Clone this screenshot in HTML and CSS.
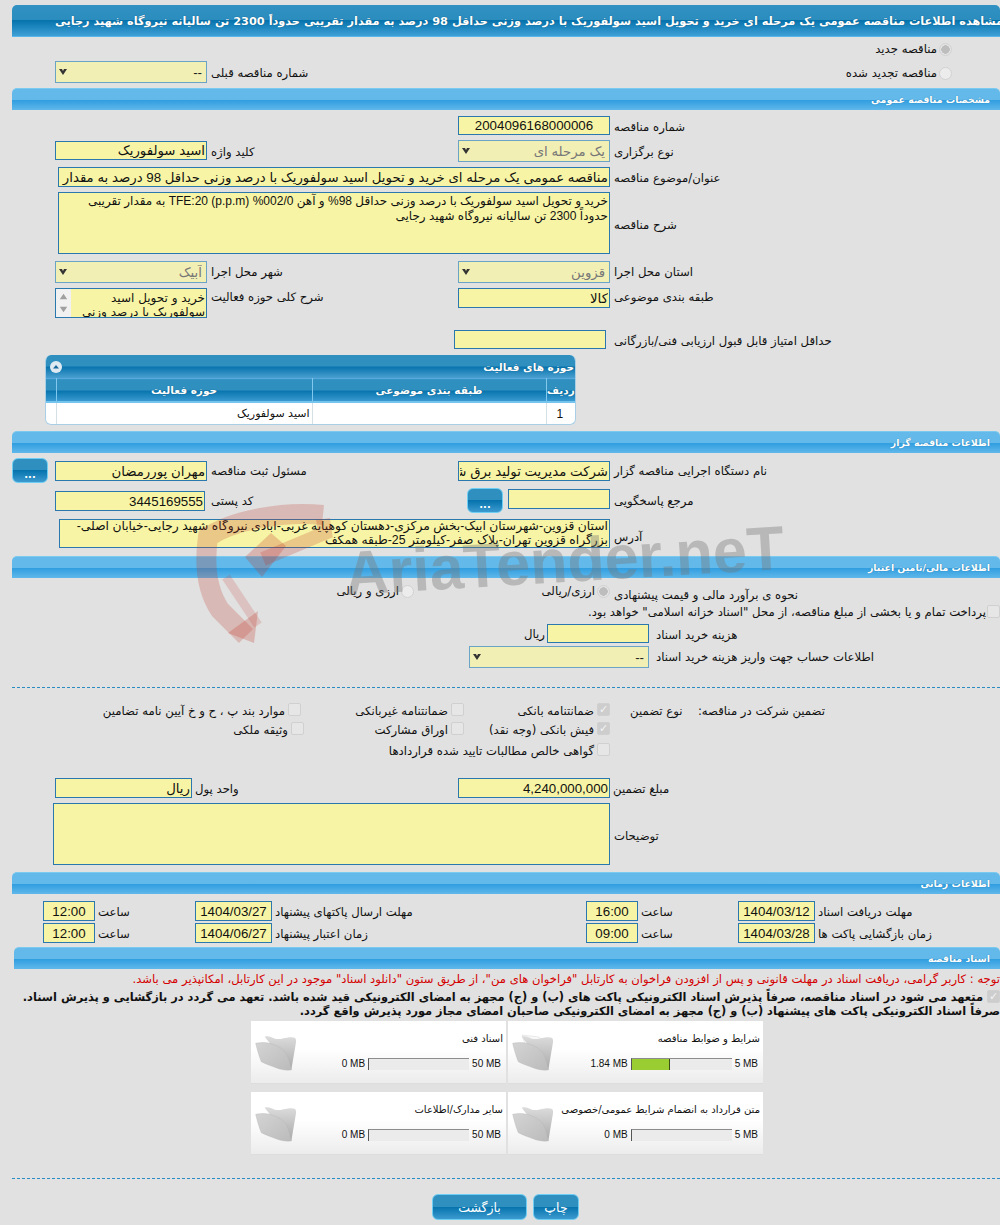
FILE: index.html
```html
<!DOCTYPE html>
<html lang="fa" dir="rtl">
<head>
<meta charset="utf-8">
<title>مشاهده اطلاعات مناقصه</title>
<link rel="stylesheet" href="styles.css">
</head>
<body>
<main class="page">
  <h1 class="title"><span>مشاهده اطلاعات مناقصه عمومی یک مرحله ای خرید و تحویل اسید سولفوریک با درصد وزنی حداقل 98 درصد به مقدار تقریبی حدوداً 2300 تن سالیانه نیروگاه شهید رجایی</span></h1>

  <div class="row r-new"><label class="radio-label"><input class="radio" type="radio" checked disabled>مناقصه جدید</label></div>
  <div class="row r-prev">
    <label class="radio-label span2 renewed"><input class="radio" type="radio" disabled>مناقصه تجدید شده</label>
    <div class="lbl">شماره مناقصه قبلی</div>
    <div class="sel"><select disabled class="dark"><option>--</option></select><svg class="arrow" viewBox="0 0 8 6"><path d="M0 0h3l1 2 1-2h3L4 6z"/></svg></div>
  </div>

  <h2 class="sec s1">مشخصات مناقصه عمومی</h2>
  <div class="row r-num"><div class="lbl">شماره مناقصه</div><input class="inp center" value="2004096168000006" readonly></div>
  <div class="row r-type">
    <div class="lbl">نوع برگزاری</div>
    <div class="sel"><select disabled><option>یک مرحله ای</option></select><svg class="arrow" viewBox="0 0 8 6"><path d="M0 0h3l1 2 1-2h3L4 6z"/></svg></div>
    <div class="lbl">کلید واژه</div>
    <input class="inp kw" value="اسید سولفوریک" readonly>
  </div>
  <div class="row r-subj">
    <div class="lbl">عنوان/موضوع مناقصه</div>
    <input class="inp span3 wide" value="مناقصه عمومی یک مرحله ای خرید و تحویل اسید سولفوریک با درصد وزنی حداقل 98 درصد به مقدار تقریبی حدوداً 2300 تن سالیانه نیروگاه شهید رجایی" readonly>
  </div>
  <div class="row r-desc">
    <div class="lbl mid">شرح مناقصه</div>
    <textarea class="inp span3 wide" readonly>خرید و تحویل اسید سولفوریک با درصد وزنی حداقل 98% و آهن 002/0% TFE:20 (p.p.m) به مقدار تقریبی حدوداً 2300 تن سالیانه نیروگاه شهید رجایی</textarea>
  </div>
  <div class="row r-prov">
    <div class="lbl">استان محل اجرا</div>
    <div class="sel"><select disabled><option>قزوین</option></select><svg class="arrow" viewBox="0 0 8 6"><path d="M0 0h3l1 2 1-2h3L4 6z"/></svg></div>
    <div class="lbl">شهر محل اجرا</div>
    <div class="sel"><select disabled><option>آبیک</option></select><svg class="arrow" viewBox="0 0 8 6"><path d="M0 0h3l1 2 1-2h3L4 6z"/></svg></div>
  </div>
  <div class="row r-cat">
    <div class="lbl top">طبقه بندی موضوعی</div>
    <input class="inp h20" value="کالا" readonly>
    <div class="lbl top">شرح کلی حوزه فعالیت</div>
    <div class="listbox">
      <div class="lb-text">خرید و تحویل اسید سولفوریک با درصد وزنی</div>
      <div class="lb-scroll"><svg viewBox="0 0 15 30"><path d="M7.5 5l4 6h-8zM7.5 25l4-6h-8z"/></svg></div>
    </div>
  </div>
  <div class="row r-min">
    <div class="lbl">حداقل امتیاز قابل قبول ارزیابی فنی/بازرگانی</div>
    <input class="inp shift4" readonly>
  </div>

  <section class="panel">
    <header class="panel-head"><span>حوزه های فعالیت</span><svg class="toggle" viewBox="0 0 12 12"><circle cx="6" cy="6" r="6"/><path d="M3 7.5L6 4l3 3.500z"/></svg></header>
    <table class="grid">
      <thead><tr><th class="c1">ردیف</th><th class="c2">طبقه بندی موضوعی</th><th class="c3">حوزه فعالیت</th><th class="c4"></th></tr></thead>
      <tbody><tr><td class="c1 num">1</td><td class="c2"></td><td class="c3">اسید سولفوریک</td><td class="c4"></td></tr></tbody>
    </table>
  </section>

  <h2 class="sec s2">اطلاعات مناقصه گزار</h2>
  <div class="row r-org">
    <div class="lbl">نام دستگاه اجرایی مناقصه گزار</div>
    <input class="inp h20 mt3" value="شرکت مدیریت تولید برق شهید رجایی" readonly>
    <div class="lbl">مسئول ثبت مناقصه</div>
    <input class="inp h20 mt3" value="مهران پوررمضان" readonly>
    <button class="btn dots" type="button">...</button>
  </div>
  <div class="row r-resp">
    <div class="lbl">مرجع پاسخگویی</div>
    <div class="resp"><input class="inp h20 short" readonly><button class="btn dots" type="button">...</button></div>
    <div class="lbl postal-l">کد پستی</div>
    <input class="inp h20 mt3 postal" value="3445169555" readonly>
  </div>
  <div class="row r-addr">
    <div class="lbl">آدرس</div>
    <textarea class="inp span3 addr" readonly>استان قزوین-شهرستان آبیک-بخش مرکزی-دهستان کوهپایه غربی-آبادی نیروگاه شهید رجایی-خیابان اصلی-بزرگراه قزوین تهران-پلاک صفر-کیلومتر 25-طبقه همکف</textarea>
  </div>

  <h2 class="sec s3">اطلاعات مالی/تامین اعتبار</h2>
  <div class="row r-est">
    <div class="lbl">نحوه ی برآورد مالی و قیمت پیشنهادی</div>
    <div class="est span3">
      <label class="radio-label"><input class="radio" type="radio" checked disabled>ارزی/ریالی</label>
      <label class="radio-label"><input class="radio" type="radio" disabled>ارزی و ریالی</label>
    </div>
  </div>
  <label class="pay"><input class="check" type="checkbox" disabled>پرداخت تمام و یا بخشی از مبلغ مناقصه، از محل "اسناد خزانه اسلامی" خواهد بود.</label>
  <div class="fin r-cost">
    <div class="lbl">هزینه خرید اسناد</div>
    <input class="inp cost" readonly>
    <div class="unit">ریال</div>
  </div>
  <div class="fin r-acc">
    <div class="lbl">اطلاعات حساب جهت واریز هزینه خرید اسناد</div>
    <div class="sel acc"><select disabled class="dark"><option>--</option></select><svg class="arrow" viewBox="0 0 8 6"><path d="M0 0h3l1 2 1-2h3L4 6z"/></svg></div>
  </div>

  <hr class="dash d1">

  <div class="guar">
    <div class="g-head"><span>تضمین شرکت در مناقصه:</span><span>نوع تضمین</span></div>
    <div class="g-list">
      <label class="gc"><input class="check" type="checkbox" checked disabled>ضمانتنامه بانکی</label>
      <label class="gc"><input class="check" type="checkbox" disabled>ضمانتنامه غیربانکی</label>
      <label class="gc"><input class="check" type="checkbox" disabled>موارد بند پ ، ح و خ آیین نامه تضامین</label>
      <label class="gc tall"><input class="check" type="checkbox" checked disabled>فیش بانکی (وجه نقد)</label>
      <label class="gc tall"><input class="check" type="checkbox" disabled>اوراق مشارکت</label>
      <label class="gc tall nudge"><input class="check" type="checkbox" disabled>وثیقه ملکی</label>
      <label class="gc all"><input class="check" type="checkbox" disabled>گواهی خالص مطالبات تایید شده قراردادها</label>
    </div>
  </div>

  <div class="row r-amt">
    <div class="lbl">مبلغ تضمین</div>
    <input class="inp h20" value="4,240,000,000" readonly>
    <div class="lbl">واحد پول</div>
    <input class="inp h20" value="ریال" readonly>
  </div>
  <div class="row r-notes">
    <div class="lbl">توضیحات</div>
    <textarea class="inp span3 notes" readonly></textarea>
  </div>

  <h2 class="sec s4">اطلاعات زمانی</h2>
  <div class="times t1">
    <div class="lbl">مهلت دریافت اسناد</div><input class="inp h20 tv" value="1404/03/12" readonly>
    <div class="lbl">ساعت</div><input class="inp h20 tv" value="16:00" readonly>
    <div class="lbl">مهلت ارسال پاکتهای پیشنهاد</div><input class="inp h20 tv" value="1404/03/27" readonly>
    <div class="lbl">ساعت</div><input class="inp h20 tv" value="12:00" readonly>
  </div>
  <div class="times t2">
    <div class="lbl">زمان بازگشایی پاکت ها</div><input class="inp h20 tv" value="1404/03/28" readonly>
    <div class="lbl">ساعت</div><input class="inp h20 tv" value="09:00" readonly>
    <div class="lbl">زمان اعتبار پیشنهاد</div><input class="inp h20 tv" value="1404/06/27" readonly>
    <div class="lbl">ساعت</div><input class="inp h20 tv" value="12:00" readonly>
  </div>

  <h2 class="sec s5">اسناد مناقصه</h2>
  <p class="warn">توجه : کاربر گرامی، دریافت اسناد در مهلت قانونی و پس از افزودن فراخوان به کارتابل "فراخوان های من"، از طریق ستون "دانلود اسناد" موجود در این کارتابل، امکانپذیر می باشد.</p>
  <p class="oath"><input class="check" type="checkbox" checked disabled>متعهد می شود در اسناد مناقصه، صرفاً پذیرش اسناد الکترونیکی پاکت های (ب) و (ج) مجهز به امضای الکترونیکی قید شده باشد. تعهد می گردد در بازگشایی و پذیرش اسناد.<br>صرفاً اسناد الکترونیکی پاکت های پیشنهاد (ب) و (ج) مجهز به امضای الکترونیکی صاحبان امضای مجاز مورد پذیرش واقع گردد.</p>

  <div class="cards">
    <article class="card">
      <div class="card-main"><h3>شرایط و ضوابط مناقصه</h3>
        <div class="meter"><span>5 MB</span><div class="bar"><div class="fill" style="width:38px"></div></div><span>1.84 MB</span></div></div>
      <svg class="folder" viewBox="0 0 42 42"><use href="#paper"/><use href="#fold"/></svg>
    </article>
    <article class="card">
      <div class="card-main"><h3>اسناد فنی</h3>
        <div class="meter"><span>50 MB</span><div class="bar"><div class="fill" style="width:0"></div></div><span>0 MB</span></div></div>
      <svg class="folder" viewBox="0 0 42 42"><use href="#fold"/></svg>
    </article>
    <article class="card">
      <div class="card-main"><h3>متن قرارداد به انضمام شرایط عمومی/خصوصی</h3>
        <div class="meter"><span>5 MB</span><div class="bar"><div class="fill" style="width:0"></div></div><span>0 MB</span></div></div>
      <svg class="folder" viewBox="0 0 42 42"><use href="#fold"/></svg>
    </article>
    <article class="card">
      <div class="card-main"><h3>سایر مدارک/اطلاعات</h3>
        <div class="meter"><span>50 MB</span><div class="bar"><div class="fill" style="width:0"></div></div><span>0 MB</span></div></div>
      <svg class="folder" viewBox="0 0 42 42"><use href="#fold"/></svg>
    </article>
  </div>

  <hr class="dash d2">

  <div class="actions">
    <button class="btn print" type="button">چاپ</button>
    <button class="btn back" type="button">بازگشت</button>
  </div>

  <svg class="defs" width="0" height="0" aria-hidden="true">
    <defs>
      <linearGradient id="fb" x1="0" y1="0" x2="0" y2="1"><stop offset="0" stop-color="#dcdcdc"/><stop offset="1" stop-color="#a9a9a9"/></linearGradient>
      <linearGradient id="ff" x1="0" y1="0" x2="1" y2="1"><stop offset="0" stop-color="#d4d4d4"/><stop offset="1" stop-color="#bbbbbb"/></linearGradient>
      <g id="paper"><path d="M10 5l17 2 5 6-4 8-14-4z" fill="#f8f8f8" stroke="#dddddd" stroke-width=".6"/></g>
      <g id="fold">
        <path d="M9.700 6.700c3-1 6 0 9 1.500 3 1.300 6 1 9 .3 4-1 9-2 12-.8 1.300.6 1.500 2.500 1.300 4.500L36.300 40 24 25z" fill="url(#fb)"/>
        <path d="M.7 13.300c5-1 10-1 14 0 7 2 13 5 16.500 10 2.500 5 4 11 5.100 16.700-5 .6-11-.5-15.300-2.300-5-2-10-3.500-14.700-6C4 26 2 19 .7 13.300z" fill="url(#ff)" stroke="#b5b5b5" stroke-width=".4"/>
      </g>
    </defs>
  </svg>

  <svg class="wm" viewBox="0 0 640 160" aria-hidden="true">
    <g class="wm-red">
      <path class="band" d="M125 10C85 6 35 15 10 32c-4 28-2 52 12 73l26 26"/>
      <path class="band thin" d="M125 14l2 14-62 26"/>
      <path class="solid" d="M30 128l30-22 -4 32z"/>
      <path class="solid dark" d="M47 52l26-24 15 13-24 31z"/>
      <path class="band slim" d="M28 72l32 48"/>
    </g>
    <text class="wm-text" x="148" y="90" textLength="440" lengthAdjust="spacingAndGlyphs" transform="rotate(-3.400 148 90)">AriaTender.neT</text>
  </svg>
</main>
</body>
</html>
```

FILE: styles.css
```css
* { box-sizing: border-box; }
html, body { margin: 0; padding: 0; }
body {
  background: #e1e1e1;
  color: #111;
  font: 11.700px/14px "DejaVu Sans", "Liberation Sans", sans-serif;
}
.page { position: relative; width: 1000px; height: 1225px; padding-top: 5px; overflow: hidden; }

.title {
  margin: 0 0 0 12px;
  height: 32px;
  border-radius: 5px 5px 0 0;
  background: linear-gradient(#3091c2 0, #2b8cbe 48%, #0673ad 50%, #3ea0d6 100%);
  border-bottom: 1px solid #58b7ea;
  color: #fff;
  font-size: 11.300px;
  font-weight: bold;
  line-height: 34px;
  overflow: hidden;
  white-space: nowrap;
  text-shadow: 0 0 1px #024a70;
}
.title span { display: block; margin-right: -3px; }

.sec {
  margin: 0 0 0 12px;
  height: 22px;
  padding-right: 10px;
  border-radius: 5px 5px 0 0;
  border-top: 1px solid #7cc9f0;
  background: linear-gradient(#63b9e9 0, #63b9e9 50%, #2f9de0 52%, #60b8ea 100%);
  color: #fff;
  font-size: 9.400px;
  font-weight: bold;
  line-height: 21px;
  text-shadow: 0 0 1px #1a6fa0;
}
.s1 { margin-top: 5px; }
.s2 { margin-top: 6px; }
.s3 { margin-top: 8px; }
.s4 { margin-top: 7px; }
.s5 { margin: 4px 0 0 14px; }

.row { display: grid; grid-template-columns: 390px 152px 251px 152px 55px; align-items: start; }
.lbl { text-align: left; padding-left: 4px; line-height: 22px; white-space: nowrap; }
.mid { align-self: center; padding-top: 4px; }
.top { line-height: 18px; }
.span2 { grid-column: span 2; }
.span3 { grid-column: span 3; }

.inp {
  display: block;
  width: 100%;
  height: 19px;
  margin: 0;
  padding: 0 1px;
  border: 1px solid #2a78ae;
  border-radius: 0;
  background: #f7f5a5;
  color: #111;
  font: 13.300px/16px "Liberation Sans", "DejaVu Sans", sans-serif;
  outline: none;
  resize: none;
}
textarea.inp { overflow: hidden; padding: 1px; font-size: 12px; line-height: 15px; }
.h20 { height: 20px; }
.mt3 { margin-top: 3px; }
.center { text-align: center; }

.sel { position: relative; height: 22px; }
.sel select {
  appearance: none;
  width: 100%;
  height: 100%;
  padding: 0 4px 0 0;
  border: 1px solid #6ba3c4;
  border-radius: 0;
  background: #f2efb5;
  color: #777;
  opacity: 1;
  font: 13.300px "Liberation Sans", "DejaVu Sans", sans-serif;
}
.sel select.dark { color: #222; }
.arrow { position: absolute; left: 4px; top: 8px; width: 8px; height: 6px; fill: #333; }

.radio, .check { appearance: none; flex: none; width: 13px; height: 13px; margin: 0 0 0 1px; vertical-align: middle; }
.radio { border: 1px solid #d2d2d2; border-radius: 50%; background: #ececec; }
.radio:checked { background: radial-gradient(circle, #bdbdbd 0, #bdbdbd 4px, #e4e4e4 4.500px); }
.check { position: relative; border: 1px solid #d0d0d0; border-radius: 2px; background: #e6e6e6; }
.check:checked { background: #cdcdcd; }
.check:checked::before { content: "✓"; position: absolute; inset: 0; color: #f4f4f4; font: bold 11px/11px "DejaVu Sans", sans-serif; text-align: center; }

.radio-label { display: flex; align-items: center; gap: 1px; white-space: nowrap; }
.r-new { margin-top: 5px; height: 17px; }
.r-new .radio-label { grid-column: 1; padding-right: 48px; }
.r-prev { margin-top: 2px; height: 22px; }
.r-prev .lbl { line-height: 24px; }
.renewed { padding-right: 48px; align-self: center; }
.r-num { margin-top: 6px; height: 19px; }
.r-type { margin-top: 5px; height: 22px; }
.r-type .lbl { line-height: 24px; }
.kw { margin-top: 1px; }
.r-subj { margin-top: 5px; height: 20px; }
.wide { width: 552px; }
.r-subj .wide { height: 20px; }
.r-desc { margin-top: 5px; height: 62px; }
.r-desc .wide { height: 62px; }
.r-prov { margin-top: 7px; height: 22px; }
.r-cat { margin-top: 5px; height: 30px; }
.r-min { margin-top: 12px; height: 19px; }
.shift4 { margin-right: 4px; }

.listbox { display: flex; height: 30px; border: 1px solid #2a78ae; background: #f7f5a5; overflow: hidden; }
.lb-text { flex: 1; padding: 2px 1px 0 0; font-size: 12px; line-height: 14px; }
.lb-scroll { width: 15px; flex: none; background: #f1f1f1; }
.lb-scroll svg { display: block; width: 15px; height: 28px; fill: #a0a0a0; }

.panel {
  width: 531px;
  height: 70px;
  margin: 6px 424px 0 0;
  border: 1px solid #a9cfe6;
  border-top: 0;
  border-radius: 6px;
  background: #fff;
  overflow: hidden;
}
.panel-head {
  display: flex;
  justify-content: space-between;
  align-items: center;
  height: 23px;
  padding: 0 1px 0 4px;
  background: linear-gradient(#2f90c0 0, #2f90c0 48%, #0874ad 52%, #4a9fd0 100%);
  color: #fff;
  font-size: 10.500px;
  font-weight: bold;
  text-shadow: 0 0 1px #024a70;
}
.toggle { width: 12px; height: 12px; }
.toggle circle { fill: #dfe9f2; }
.toggle path { fill: #16679a; }
.grid { width: 100%; border-collapse: collapse; table-layout: fixed; }
.grid th {
  height: 23px;
  padding: 0;
  background: linear-gradient(#2f90c0 0, #2f90c0 48%, #0874ad 52%, #3c9bd2 100%);
  border-left: 1px solid #82c8ee;
  border-bottom: 2px solid #74c4ee;
  border-top: 1px solid #58a9d9;
  color: #fff;
  font-size: 10.500px;
  font-weight: bold;
  text-shadow: 0 0 1px #024a70;
}
.grid td { height: 23px; padding: 0 2px 0 0; border-left: 1px solid #d4dfe6; font-size: 11px; }
.grid .c1 { width: 29px; }
.grid .c2 { width: 234px; }
.grid .c3 { width: 256px; }
.grid .c4 { border-left: 0; }
.grid .num { text-align: center; font-family: "Liberation Sans", sans-serif; font-size: 12px; }

.btn {
  border: 1px solid #6dcdf2;
  border-radius: 6px;
  background: linear-gradient(#2f90c0 0, #2f90c0 48%, #0673ad 50%, #3c9bcf 100%);
  color: #fff;
  font: 12.500px "DejaVu Sans", sans-serif;
  padding: 0;
}
.dots { width: 36px; height: 25px; padding-top: 8px; font-weight: bold; font-size: 10px; line-height: 12px; }
.r-org { margin-top: 5px; height: 25px; }
.r-org .lbl { line-height: 26px; }
.r-org .dots { margin-right: 7px; }
.r-resp { margin-top: 5px; height: 25px; }
.r-resp .lbl { line-height: 26px; }
.resp { display: flex; gap: 5px; }
.short { width: 102px; margin-top: 1px; flex: none; }
.postal { width: 150px; margin-right: 2px; }
.r-addr { margin-top: 6px; height: 29px; }
.r-addr .lbl { line-height: 36px; }
textarea.addr { width: 551px; height: 29px; padding: 0 1px; font-size: 12.300px; line-height: 13.500px; }

.r-est { margin-top: 6px; height: 17px; }
.est { display: flex; gap: 0; }
.est .radio-label:first-child { width: 196px; }
.pay { display: block; margin-top: 2px; height: 18px; line-height: 18px; white-space: nowrap; }
.pay .check { margin: 0 0 2px 1px; }
.fin { display: grid; grid-template-columns: 351px auto auto; justify-content: start; align-items: start; }
.r-cost { margin-top: 3px; height: 19px; }
.r-acc { margin-top: 3px; height: 22px; }
.fin .lbl { padding-left: 7px; }
.cost { width: 102px; }
.unit { padding: 3px 2px 0 0; }
.acc { width: 180px; }

.dash { margin: 0 0 0 12px; height: 0; border: 0; border-top: 1px dashed #2d8bc4; }
.d1 { margin-top: 19px; }
.d2 { margin-top: 23px; }

.guar { display: grid; grid-template-columns: 390px 1fr; margin-top: 15px; height: 59px; }
.g-head { display: flex; justify-content: space-between; padding: 1px 175px 0 20px; line-height: 14px; white-space: nowrap; }
.g-list { display: grid; grid-template-columns: 146px 163px 1fr; grid-auto-rows: 19px; }
.gc { display: flex; gap: 2px; white-space: nowrap; line-height: 16px; }
.tall { height: 21px; }
.nudge { margin-right: -3px; }
.all { grid-column: 1 / -1; margin-top: 2px; }

.r-amt { margin-top: 16px; height: 20px; grid-template-columns: 390px 152px 266px 137px 55px; }
.r-amt .lbl { padding-left: 3px; }
.r-notes { margin-top: 5px; height: 62px; }
.r-notes .lbl { line-height: 66px; }
.notes { width: 557px; height: 62px; }

.times { display: grid; grid-template-columns: 185px 77px 100px 52px 314px 77px 100px 52px; height: 20px; }
.t1 { margin-top: 7px; }
.t2 { margin-top: 2px; }
.times .lbl { padding-left: 3px; }
.tv { text-align: center; padding: 0; }

.warn { margin: 3px 0 0; height: 14px; color: #d40000; font-size: 11.600px; white-space: nowrap; }
.oath { margin: 4px 0 0; height: 28px; font-weight: bold; font-size: 11.400px; white-space: nowrap; }
.oath .check { margin: -3px 0 0 4px; }

.cards { display: grid; grid-template-columns: 255px 255px; gap: 8px 2px; margin: 3px 237px 0 0; width: 512px; }
.card {
  display: flex;
  height: 63px;
  padding: 11px 3px 0 4px;
  background: linear-gradient(#fff 0, #fff 45%, #ececec 100%);
  border-bottom: 1px solid #ddd;
}
.card-main { flex: 1; }
.card h3 { margin: 0; height: 14px; font-size: 10px; font-weight: normal; line-height: 14px; white-space: nowrap; }
.folder { flex: none; width: 42px; height: 42px; margin-top: -2px; }
.meter { display: flex; gap: 3px; margin-top: 12px; padding-right: 2px; font: 10px/12px "Liberation Sans", sans-serif; }
.meter span { white-space: nowrap; direction: ltr; }
.bar { width: 101px; height: 12px; flex: none; direction: ltr; background: #ebebeb; border-top: 1px solid #8c8c8c; border-left: 1px solid #555; }
.fill { height: 11px; background: #9acd32; border-right: 1px solid #3d4d16; }
.fill[style="width:0"] { border-right: 0; }

.actions { display: flex; gap: 6px; margin: 15px 421px 0 0; }
.print { width: 46px; height: 26px; }
.back { width: 95px; height: 26px; }

.defs { position: absolute; }
.wm { position: absolute; left: 198px; top: 505px; width: 640px; height: 160px; pointer-events: none; overflow: visible; direction: ltr; }
.band { fill: none; stroke: #c0392b; stroke-width: 20; opacity: .24; }
.thin { stroke-width: 14; }
.slim { stroke-width: 9; opacity: .18; }
.solid { fill: #c0392b; opacity: .26; }
.wm-text { font: bold 62px "Liberation Sans", sans-serif; fill: #777; opacity: .38; direction: ltr; }
```
